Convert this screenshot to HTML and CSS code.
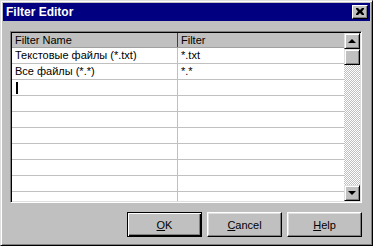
FILE: index.html
```html
<!DOCTYPE html>
<html lang="ru">
<head>
    <meta charset="UTF-8">
    <title>Filter Editor</title>
    <link rel="stylesheet" href="styles.css">
</head>
<body>
    <div class="window">
        <div class="titlebar">
            <span class="title">Filter Editor</span>
            <div class="close">
                <svg width="8" height="7" viewBox="0 0 8 7">
                    <path d="M0 0h2l2 2 2-2h2v1L6 3.5 8 6v1H6L4 5 2 7H0V6l2-2.5L0 1z" fill="#000"/>
                </svg>
            </div>
        </div>
        <div class="content">
            <div class="grid">
                <div class="table">
                    <div class="row head">
                        <div class="cell name">Filter Name</div>
                        <div class="cell">Filter</div>
                    </div>
                    <div class="row">
                        <div class="cell name">Текстовые файлы (*.txt)</div>
                        <div class="cell">*.txt</div>
                    </div>
                    <div class="row">
                        <div class="cell name">Все файлы (*.*)</div>
                        <div class="cell">*.*</div>
                    </div>
                    <div class="row">
                        <div class="cell name"><span class="caret"></span></div>
                        <div class="cell"></div>
                    </div>
                    <div class="row"><div class="cell name"></div><div class="cell"></div></div>
                    <div class="row"><div class="cell name"></div><div class="cell"></div></div>
                    <div class="row"><div class="cell name"></div><div class="cell"></div></div>
                    <div class="row"><div class="cell name"></div><div class="cell"></div></div>
                    <div class="row"><div class="cell name"></div><div class="cell"></div></div>
                    <div class="row"><div class="cell name"></div><div class="cell"></div></div>
                    <div class="row"><div class="cell name"></div><div class="cell"></div></div>
                </div>
                <div class="scrollbar">
                    <div class="sb-btn"><span class="arrow up"></span></div>
                    <div class="thumb"></div>
                    <div class="track"></div>
                    <div class="sb-btn"><span class="arrow down"></span></div>
                </div>
            </div>
            <div class="buttons">
                <div class="btn default"><span><u>O</u>K</span></div>
                <div class="btn"><span><u>C</u>ancel</span></div>
                <div class="btn"><span><u>H</u>elp</span></div>
            </div>
        </div>
    </div>
</body>
</html>
```

FILE: styles.css
```css
/* Win95 style dialog */
body {
    margin: 0;
    padding: 0;
    font-family: "Liberation Sans", Arial, sans-serif;
    font-size: 11px;
    background-color: #c0c0c0;
}
.window {
    width: 373px;
    height: 246px;
    box-sizing: border-box;
    padding: 2px;
    background-color: #c0c0c0;
    border: 1px solid;
    border-color: #dfdfdf #000 #000 #dfdfdf;
    box-shadow: inset 1px 1px #fff, inset -1px -1px #808080;
}
.titlebar {
    height: 18px;
    background-color: #000080;
    color: #fff;
    display: flex;
    align-items: center;
    justify-content: space-between;
    padding: 0 2px 0 3px;
}
.title {
    font-weight: bold;
    font-size: 12px;
}
.close {
    width: 16px;
    height: 14px;
    box-sizing: border-box;
    background-color: #c0c0c0;
    border: 1px solid;
    border-color: #fff #000 #000 #fff;
    box-shadow: inset -1px -1px #808080;
    display: flex;
    align-items: center;
    justify-content: center;
    padding: 0 1px 1px 0;
}
.content {
    padding: 10px 8px 0 7px;
}
.grid {
    height: 172px;
    box-sizing: border-box;
    border: 1px solid;
    border-color: #808080 #fff #fff #808080;
    box-shadow: inset 1px 1px #000, inset -1px -1px #dfdfdf;
    padding: 1px;
    display: flex;
    background-color: #fff;
}
.table {
    flex: 1;
    overflow: hidden;
}
.row {
    display: flex;
    height: 16px;
    box-sizing: border-box;
    border-bottom: 1px solid #c0c0c0;
    color: #000;
}
.row.head {
    height: 15px;
    background-color: #c0c0c0;
    border-bottom: 1px solid #a0a0a0;
}
.cell {
    flex: 1;
    padding: 0 3px;
    line-height: 15px;
    white-space: nowrap;
    position: relative;
}
.cell.name {
    flex: 0 0 166px;
    box-sizing: border-box;
    border-right: 1px solid #c0c0c0;
}
.row.head .cell.name {
    border-right: 1px solid #404040;
}
.caret {
    display: inline-block;
    width: 2px;
    height: 12px;
    background-color: #000;
    vertical-align: middle;
    margin-left: 1px;
}
.scrollbar {
    width: 16px;
    display: flex;
    flex-direction: column;
}
.sb-btn,
.thumb {
    height: 16px;
    box-sizing: border-box;
    background-color: #c0c0c0;
    border: 1px solid;
    border-color: #dfdfdf #000 #000 #dfdfdf;
    box-shadow: inset 1px 1px #fff, inset -1px -1px #808080;
    display: flex;
    align-items: center;
    justify-content: center;
}
.track {
    flex: 1;
    background-image: conic-gradient(#fff 25%, #c0c0c0 0 50%, #fff 0 75%, #c0c0c0 0);
    background-size: 2px 2px;
}
.arrow {
    width: 0;
    height: 0;
    border-left: 4px solid transparent;
    border-right: 4px solid transparent;
}
.arrow.up {
    border-bottom: 4px solid #000;
}
.arrow.down {
    border-top: 4px solid #000;
}
.buttons {
    display: flex;
    justify-content: flex-end;
    gap: 5px;
    margin-top: 9px;
}
.btn {
    width: 75px;
    height: 25px;
    box-sizing: border-box;
    background-color: #c0c0c0;
    border: 1px solid;
    border-color: #fff #000 #000 #fff;
    box-shadow: inset -1px -1px #808080, inset 1px 1px #dfdfdf;
    display: flex;
    align-items: center;
    justify-content: center;
    color: #000;
}
.btn.default {
    border: 1px solid #000;
    box-shadow: inset 1px 1px #fff, inset -1px -1px #000, inset -2px -2px #808080;
}
.btn u {
    text-decoration: underline;
}
```
